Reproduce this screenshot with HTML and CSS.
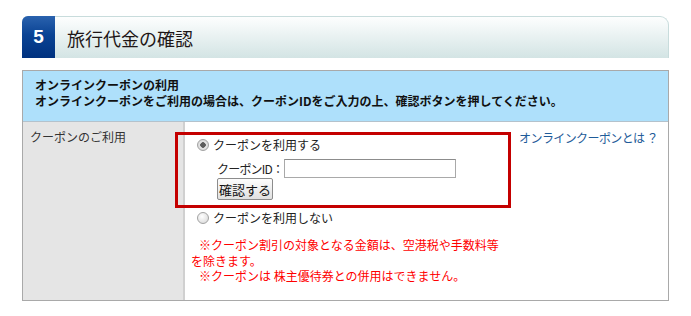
FILE: index.html
```html
<!DOCTYPE html>
<html lang="ja">
<head>
    <meta charset="UTF-8">
    <meta name="viewport" content="width=device-width, initial-scale=1.0">
    <title>旅行代金の確認</title>
    <link rel="stylesheet" href="styles.css">
</head>
<body>

    <div class="section">
        <div class="heading">
            <span class="step">5</span>
            <h2 class="title">旅行代金の確認</h2>
        </div>

        <div class="panel">
            <div class="panel-head">
                <p>オンラインクーポンの利用</p>
                <p>オンラインクーポンをご利用の場合は、クーポンIDをご入力の上、確認ボタンを押してください。</p>
            </div>

            <div class="panel-row">
                <div class="row-label">クーポンのご利用</div>
                <div class="row-body">
                    <div class="options">
                        <div class="coupon-box">
                            <label class="choice"><input type="radio" name="coupon" checked>クーポンを利用する</label>
                            <div class="coupon-id">
                                <label for="couponId">クーポンID：</label>
                                <input type="text" id="couponId" name="couponId">
                            </div>
                            <button type="button">確認する</button>
                        </div>
                        <label class="choice"><input type="radio" name="coupon">クーポンを利用しない</label>
                        <div class="notes">
                            <p>※クーポン割引の対象となる金額は、空港税や手数料等を除きます。</p>
                            <p>※クーポンは 株主優待券との併用はできません。</p>
                        </div>
                    </div>
                    <a class="about" href="#">オンラインクーポンとは ？</a>
                </div>
            </div>
        </div>
    </div>

</body>
</html>
```

FILE: styles.css
```css
body {
    margin: 0;
    font-family: "Noto Sans CJK JP", sans-serif;
    font-size: 12px;
    color: #222;
    background-color: #fff;
}
p {
    margin: 0;
}
.section {
    width: 647px;
    padding: 16px 0 0 22px;
}
.heading {
    display: flex;
    align-items: center;
    height: 41px;
    border-top: 1px solid #c8dcdc;
    border-right: 1px solid #c8dcdc;
    border-radius: 6px 9px 0 0;
    background: linear-gradient(#fdfefe, #d3e4e4);
}
.step {
    align-self: stretch;
    width: 33px;
    margin-top: -1px;
    display: flex;
    align-items: center;
    justify-content: center;
    border-radius: 6px 0 0 0;
    background: linear-gradient(#2a62ae, #0a4394 45%, #00317f);
    color: #fff;
    font-family: "Liberation Sans", Arial, sans-serif;
    font-size: 19px;
    font-weight: bold;
}
.title {
    margin: 0 0 0 12px;
    font-size: 18px;
    font-weight: normal;
    color: #1e1616;
}
.panel {
    margin-top: 12px;
    border: 1px solid #a9a9a9;
}
.panel-head {
    padding: 6px 12px 12px;
    background-color: #aee0fb;
    border-bottom: 1px solid #b4c2cc;
    font-weight: bold;
    line-height: 16px;
    color: #111;
}
.panel-row {
    display: flex;
}
.row-label {
    box-sizing: border-box;
    width: 162px;
    padding: 7px 0 0 7px;
    background-color: #e5e5e5;
    border-right: 2px solid #d0d0d0;
    line-height: 16px;
    color: #333;
}
.row-body {
    flex: 1;
    display: flex;
    align-items: flex-start;
    padding: 8px 10px 16px 6px;
}
.options {
    margin-top: 7px;
}
.choice {
    display: flex;
    align-items: center;
    gap: 4px;
    margin-left: 6px;
    line-height: 16px;
    color: #222;
}
.choice input {
    appearance: none;
    width: 12px;
    height: 12px;
    margin: 0;
    border: 1px solid #a2a2a2;
    border-radius: 50%;
    background: radial-gradient(circle at 40% 35%, #fff, #d4d4d4);
}
.choice input:checked {
    background: radial-gradient(circle, #5c5c5c 0 2.5px, #e6e6e6 3px, #cdcdcd);
}
.coupon-box {
    position: relative;
    margin-left: 6px;
}
.coupon-box .choice {
    margin-left: 0;
}
/* red highlight frame drawn over the coupon inputs */
.coupon-box::after {
    content: "";
    position: absolute;
    left: -22px;
    top: -5px;
    width: 336px;
    height: 76px;
    box-sizing: border-box;
    border: 3px solid #c40000;
    pointer-events: none;
}
.coupon-id {
    display: flex;
    align-items: center;
    margin: 6px 0 0 20px;
    line-height: 19px;
}
.coupon-id label {
    letter-spacing: -0.8px;
}
.coupon-id input {
    box-sizing: border-box;
    width: 172px;
    height: 19px;
    margin: 0 0 0 1px;
    padding: 0 3px;
    border: 1px solid #a9a9a9;
    border-top-color: #8c8c8c;
    font-size: 12px;
}
button {
    display: block;
    width: 56px;
    height: 22px;
    margin-left: 20px;
    padding: 0;
    border: 1px solid #8c8c8c;
    border-radius: 2px;
    background: linear-gradient(#fdfdfd, #e0e0e0);
    font-family: "Noto Sans CJK JP", sans-serif;
    font-size: 13px;
    color: #111;
}
.options > .choice {
    margin-top: 10px;
}
.notes {
    width: 316px;
    margin-top: 11px;
    color: #f00;
    line-height: 15.5px;
}
.notes p {
    text-indent: 8px;
}
.about {
    margin-left: auto;
    line-height: 16px;
    letter-spacing: -0.6px;
    color: #1f5c99;
    text-decoration: none;
}
```
